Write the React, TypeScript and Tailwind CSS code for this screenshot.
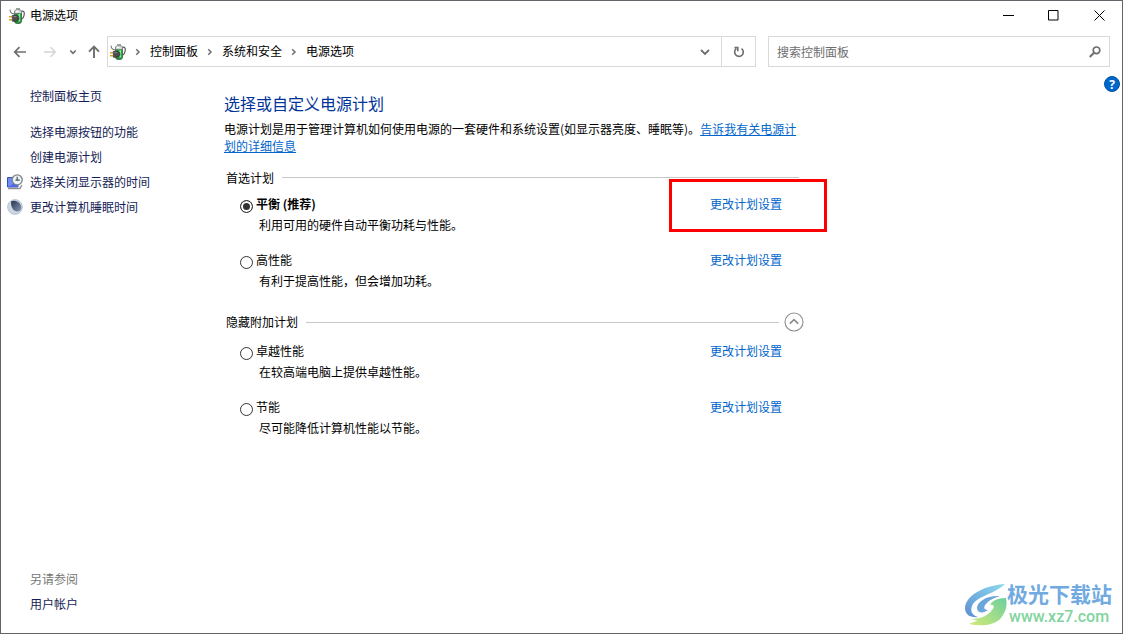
import { useState } from 'react'

type Plan = {
  id: string
  name: string
  description: string
  highlighted?: boolean
}

const preferredPlans: Plan[] = [
  { id: 'balanced', name: '平衡 (推荐)', description: '利用可用的硬件自动平衡功耗与性能。', highlighted: true },
  { id: 'high', name: '高性能', description: '有利于提高性能，但会增加功耗。' },
]

const extraPlans: Plan[] = [
  { id: 'ultimate', name: '卓越性能', description: '在较高端电脑上提供卓越性能。' },
  { id: 'saver', name: '节能', description: '尽可能降低计算机性能以节能。' },
]

const crumbs = ['控制面板', '系统和安全', '电源选项']

function PowerIcon() {
  return (
    <svg className="size-4 shrink-0" viewBox="0 0 16 16" aria-hidden="true">
      <path d="M11.500 3.500c3.500-1.500 4.300 1 3.500 4-.3 1.500-.8 2.500-2 3.500" fill="none" stroke="#5a5a5a" strokeWidth="1.200" />
      <rect x="5.500" y="2.500" width="7" height="13" rx="2.500" fill="#1f9a3a" stroke="#3f5a45" strokeWidth=".8" />
      <path d="M5.500 5.500V3c0-1.600 7-1.600 7 0v2.500z" fill="#d3d9d5" stroke="#6a726c" strokeWidth=".7" />
      <path d="M7 .9h4" stroke="#7d8580" strokeWidth="1.300" />
      <path d="M10.300 6v7.500" stroke="#7cf08c" strokeWidth="1.800" />
      <path d="M7 3.300h2.500" stroke="#fff" strokeWidth="1.400" />
      <path d="M1 1.500c.3 2.500 1.300 4.500 4.200 4.200" fill="none" stroke="#777" strokeWidth="1.100" />
      <path d="M3.300 7.300h3.500c2 0 3.200 1.200 3.200 3s-1.500 3-3.200 3H3.300z" fill="#4b4b4f" stroke="#2d2d30" strokeWidth=".6" />
      <path d="M4.500 8.700h2.800" stroke="#8d8d92" />
      <path d="M0 8.700h3M0 11.700h3" stroke="#d9a21a" strokeWidth="1.400" />
    </svg>
  )
}

function MonitorIcon() {
  return (
    <svg className="size-4" viewBox="0 0 16 16" aria-hidden="true">
      <path d="M.5 3.500h10.500v9.500H.5z" fill="#6f8cf5" stroke="#3a4fb8" />
      <path d="M2 13l9-7v7z" fill="#4c6ae6" />
      <path d="M1 14.500h12l1.800-3.500" fill="none" stroke="#8f9199" strokeWidth="1.400" />
      <circle cx="10.200" cy="5.800" r="5" fill="#eef3f3" stroke="#7b868c" strokeWidth="1.300" />
      <path d="M10.200 2.700v3.500M8.500 6.200h4.200" fill="none" stroke="#3f5961" strokeWidth="1.200" />
    </svg>
  )
}

function MoonIcon() {
  return (
    <svg className="size-4" viewBox="0 0 16 16" aria-hidden="true">
      <defs>
        <linearGradient id="moonShade" x1="0" y1="0" x2="1" y2="1">
          <stop offset="0" stopColor="#27344f" />
          <stop offset="1" stopColor="#8797b8" />
        </linearGradient>
      </defs>
      <circle cx="8" cy="8" r="7.400" fill="#cdd8e4" stroke="#aebac8" strokeWidth=".8" />
      <path d="M4.200 2.300C8 .5 14 3 14.300 8.500c-.2 2.800-2 4.300-4.500 4C6 12 3.500 7.500 4.200 2.300z" fill="url(#moonShade)" />
    </svg>
  )
}

function SwirlLogo() {
  return (
    <svg className="h-[42px] w-[43px] shrink-0" viewBox="0 0 43 42" aria-hidden="true">
      <defs>
        <linearGradient id="swirlBlue" x1="1" y1="0" x2="0" y2="1">
          <stop offset="0" stopColor="#8edaf0" />
          <stop offset="1" stopColor="#5c8fd2" />
        </linearGradient>
        <linearGradient id="swirlGreen" x1="1" y1="0" x2="0" y2="1">
          <stop offset="0" stopColor="#6ccf9e" />
          <stop offset="1" stopColor="#d2ea78" />
        </linearGradient>
      </defs>
      <path d="M41 0C23 1 2 10 1 24c0 7 6 10 13 9-6-2-8-6-6-11C12 12 29 11 41 0z" fill="url(#swirlBlue)" />
      <path d="M36 12c-12-1-23 5-23 12 0 5 6 6 11 2-4 0-5-3-2-6 3-4 8-6 14-8z" fill="#6aa5db" />
      <path d="M42 14c-9 0-14 3-16 7 4-1 5 2 2 5-5 7-14 9-21 9 3 1 5 1 7 2-3 0-6 2-9 3 14 3 29 1 34-9 4-6 4-12 3-17z" fill="url(#swirlGreen)" />
    </svg>
  )
}

function SideLink({ children, icon }: { children: React.ReactNode; icon?: React.ReactNode }) {
  return (
    <li className="flex h-[25px] items-center">
      <span className="w-[29px] shrink-0 pl-1.5">{icon}</span>
      <a href="#" className="text-[#151c55] hover:underline">{children}</a>
    </li>
  )
}

function PlanRow({ plan, selected, onSelect }: { plan: Plan; selected: boolean; onSelect: () => void }) {
  return (
    <div className="pr-[22px] pl-4">
      <div className="flex h-[21px] items-center justify-between">
        <div className="flex items-center gap-[3px]">
          <input
            type="radio"
            id={plan.id}
            name="plan"
            checked={selected}
            onChange={onSelect}
            className="mt-[5px] size-[13px] appearance-none rounded-full border border-[#333] bg-white checked:bg-[#333] checked:shadow-[inset_0_0_0_2px_white]"
          />
          <label htmlFor={plan.id} className={selected ? 'font-bold' : ''}>{plan.name}</label>
        </div>
        <div className="relative">
          <a href="#" className="text-[#0066cc] hover:underline">更改计划设置</a>
          {plan.highlighted && (
            <div className="pointer-events-none absolute -top-4 -right-[45px] -bottom-5 -left-[41px] border-3 border-[#fe0000]" />
          )}
        </div>
      </div>
      <p className="h-[21px] pl-[19px] leading-[21px]">{plan.description}</p>
    </div>
  )
}

export default function App() {
  const [selected, setSelected] = useState('balanced')
  const [expanded, setExpanded] = useState(true)

  const renderPlans = (plans: Plan[]) =>
    plans.map((plan) => (
      <PlanRow key={plan.id} plan={plan} selected={selected === plan.id} onSelect={() => setSelected(plan.id)} />
    ))

  return (
    <div className="relative flex min-h-screen flex-col border border-[#67616a] bg-white font-['Noto_Sans_CJK_SC','Noto_Sans',sans-serif] text-[12px] leading-[17px] text-black">
      {/* Title bar */}
      <header className="flex h-[29px] items-center pl-2">
        <PowerIcon />
        <h1 className="ml-[5px] flex-1 pb-0.5">电源选项</h1>
        <button type="button" aria-label="最小化" className="flex h-[29px] w-[46px] items-center justify-center">
          <svg className="size-[11px]" viewBox="0 0 11 11"><path d="M0 5.500h11" stroke="#000" /></svg>
        </button>
        <button type="button" aria-label="最大化" className="flex h-[29px] w-[45px] items-center justify-center">
          <svg className="size-[11px]" viewBox="0 0 11 11"><path d="M.5.5h9.500v9.500H.5z" fill="none" stroke="#000" /></svg>
        </button>
        <button type="button" aria-label="关闭" className="flex h-[29px] w-[46px] items-center justify-center">
          <svg className="size-[11px]" viewBox="0 0 11 11"><path d="M.5.5l10 10M10.500.5l-10 10" stroke="#000" /></svg>
        </button>
      </header>

      {/* Navigation */}
      <nav className="mt-1.5 flex h-[31px] items-center pr-3">
        <div className="flex w-[106px] shrink-0 items-center pl-3 text-[#6e6e6e]">
          <button type="button" aria-label="后退">
            <svg className="size-[14px]" viewBox="0 0 14 14"><path d="M13 7H2M6.500 2.200L1.700 7l4.800 4.800" fill="none" stroke="currentColor" strokeWidth="1.700" /></svg>
          </button>
          <button type="button" aria-label="前进" className="ml-4 text-[#d4d4d4]">
            <svg className="size-[14px]" viewBox="0 0 14 14"><path d="M1 7h11M7.500 2.200L12.300 7l-4.800 4.800" fill="none" stroke="currentColor" strokeWidth="1.400" /></svg>
          </button>
          <button type="button" aria-label="最近浏览的位置" className="ml-3">
            <svg className="size-2" viewBox="0 0 8 8"><path d="M1.200 2.500L4 5.300l2.800-2.800" fill="none" stroke="currentColor" strokeWidth="1.600" /></svg>
          </button>
          <button type="button" aria-label="上移" className="ml-2.5">
            <svg className="size-[14px]" viewBox="0 0 14 14"><path d="M7 13V2M2 6.700l5-5 5 5" fill="none" stroke="currentColor" strokeWidth="1.900" /></svg>
          </button>
        </div>

        <div className="flex h-full flex-1 items-center border border-[#d9d9d9] pl-0.5">
          <PowerIcon />
          {crumbs.map((crumb) => (
            <span key={crumb} className="flex items-center">
              <svg className="mx-2 size-2" viewBox="0 0 8 8"><path d="M2.200 1.200L5 4 2.200 6.800" fill="none" stroke="#6e6e6e" strokeWidth="1.500" /></svg>
              <a href="#" className="pb-0.5">{crumb}</a>
            </span>
          ))}
          <button type="button" aria-label="以前的位置" className="ml-auto flex h-full w-8 items-center justify-center">
            <svg className="size-[10px]" viewBox="0 0 10 10"><path d="M1 3l4 4 4-4" fill="none" stroke="#6e6e6e" strokeWidth="1.800" /></svg>
          </button>
          <button type="button" aria-label="刷新" className="flex h-full w-[34px] items-center justify-center border-l border-[#d9d9d9]">
            <svg className="size-3" viewBox="0 0 12 12">
              <path d="M8.500 2.600a4.300 4.300 0 1 1-5.200.1" fill="none" stroke="#6e6e6e" strokeWidth="1.600" />
              <path d="M1.500 1.600h3.300v3.600" fill="none" stroke="#6e6e6e" strokeWidth="1.600" />
            </svg>
          </button>
        </div>

        <div className="ml-3 flex h-full w-[342px] items-center border border-[#d9d9d9] px-2">
          <input type="text" aria-label="搜索控制面板" placeholder="搜索控制面板" className="min-w-0 flex-1 outline-none placeholder:text-[#6d6d6d]" />
          <svg className="size-3" viewBox="0 0 12 12">
            <circle cx="7.500" cy="4.300" r="3.300" fill="none" stroke="#6e6e6e" strokeWidth="1.700" />
            <path d="M5 6.800L.8 11" stroke="#6e6e6e" strokeWidth="2" />
          </svg>
        </div>
      </nav>

      <div className="flex flex-1">
        {/* Sidebar */}
        <aside className="flex w-[223px] shrink-0 flex-col pt-4 pb-[17px]">
          <ul>
            <SideLink>控制面板主页</SideLink>
          </ul>
          <ul className="mt-[11px]">
            <SideLink>选择电源按钮的功能</SideLink>
            <SideLink>创建电源计划</SideLink>
            <SideLink icon={<MonitorIcon />}>选择关闭显示器的时间</SideLink>
            <SideLink icon={<MoonIcon />}>更改计算机睡眠时间</SideLink>
          </ul>
          <h2 className="mt-auto flex h-[25px] items-center pl-[29px] text-[#777]">另请参阅</h2>
          <ul>
            <SideLink>用户帐户</SideLink>
          </ul>
        </aside>

        {/* Power plans */}
        <main className="w-[580px] pt-6">
          <h2 className="text-[16px] leading-6 text-[#003399]">选择或自定义电源计划</h2>
          <p className="mt-[5px]">
            电源计划是用于管理计算机如何使用电源的一套硬件和系统设置(如显示器亮度、睡眠等)。
            <a href="#" className="text-[#0066cc] underline">告诉我有关电源计划的详细信息</a>
          </p>

          <section className="mt-[13px]">
            <div className="flex h-5 items-center gap-2 pr-[5px] pl-0.5">
              <h3>首选计划</h3>
              <div className="h-px flex-1 bg-[#c8c8c8]" />
            </div>
            <div className="mt-1.5 flex flex-col gap-3.5">{renderPlans(preferredPlans)}</div>
          </section>

          <section className="mt-[21px]">
            <div className="flex h-5 items-center pl-0.5">
              <h3 className="pb-0.5">隐藏附加计划</h3>
              <div className="mr-[5px] ml-2 h-px flex-1 bg-[#c8c8c8]" />
              <button type="button" aria-label="隐藏附加计划" aria-expanded={expanded} onClick={() => setExpanded(!expanded)}>
                <svg className="size-5" viewBox="0 0 20 20">
                  <circle cx="10" cy="10" r="9" fill="none" stroke="#8c8c8c" strokeWidth="1.100" />
                  <path d="M5.800 11.700L10 7.700l4.200 4" fill="none" stroke="#8c8c8c" strokeWidth="1.700" />
                </svg>
              </button>
            </div>
            {expanded && <div className="mt-2 flex flex-col gap-3.5">{renderPlans(extraPlans)}</div>}
          </section>
        </main>

        <button type="button" aria-label="帮助" className="mt-[9px] mr-0.5 ml-auto flex size-4 items-center justify-center rounded-full border border-[#00539f] bg-[#0066cc] font-['Open_Sans',sans-serif] font-bold text-white">
          ?
        </button>
      </div>

      {/* Site watermark */}
      <div className="absolute right-2.5 bottom-1.5 flex items-center">
        <SwirlLogo />
        <div className="font-['Liberation_Sans','Noto_Sans_CJK_SC',sans-serif]">
          <p className="text-[21px] leading-6 font-bold text-[#70aae0]">极光下载站</p>
          <p className="pl-0.5 font-['Roboto',sans-serif] text-[16px] leading-5 font-medium text-[#80d49e]">www.xz7.com</p>
        </div>
      </div>
    </div>
  )
}
